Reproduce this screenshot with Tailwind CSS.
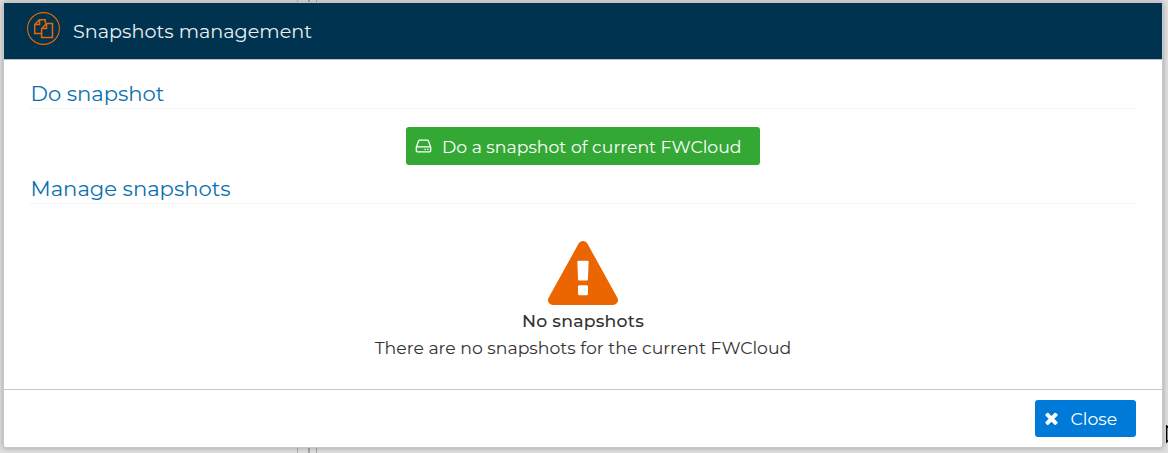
<!DOCTYPE html>
<html lang="en">
<head>
<meta charset="utf-8">
<title>Snapshots management</title>
<script src="https://cdn.jsdelivr.net/npm/@tailwindcss/browser@4"></script>
</head>
<body class="relative h-[453px] w-[1168px] overflow-hidden bg-[#dedede] font-[Montserrat,Inter,sans-serif]">
<!-- page panels behind the dialog -->
<div class="absolute left-[297px] top-0 h-full w-px bg-[#b4b4b4]"></div>
<div class="absolute left-[308px] top-0 h-full w-[2px] bg-[#a8a8a8]"></div>
<div class="absolute left-[316px] top-0 h-full w-px bg-[#a8a8a8]"></div>

<main class="relative ml-[3px] mt-[2px] flex h-[446px] w-[1160px] flex-col rounded-[3px] border border-[#c8c8c8] bg-white shadow-[0_0_5px_rgba(0,0,0,0.3)]">
  <header class="flex h-[57px] shrink-0 items-start border-b border-[#b5c0c9] bg-[#00334f] pl-[23px]">
    <svg class="mt-[9px] size-[33px]" viewBox="0 0 33 33" fill="none" stroke="#eb6500">
      <circle cx="16.5" cy="16.5" r="15.9" stroke-width="1.1"/>
      <path d="M14.2 21.5H7.7V12.6L12.5 7.7H18.3V11.3M12.6 7.8V12.6H7.8M14.6 25.4V16.7L19.5 11.6H25.5V25.4ZM19.5 11.8V16.6H14.8" stroke-width="1.5"/>
    </svg>
    <h1 class="ml-[13px] mt-[15px] whitespace-nowrap text-[19.2px] leading-[26px] text-[#e9eef1]">Snapshots management</h1>
  </header>

  <section class="flex grow flex-col px-[26px] text-[#333]">
    <h2 class="mt-[19px] flex h-[30px] items-center border-b border-[#f4f4f4] pl-[0.5px] pt-px text-[21.12px] text-[#0a70b0]">Do snapshot</h2>
    <button class="ml-[376px] mt-[18px] flex h-[38px] w-[354px] items-center rounded-[3px] bg-[#34a835] pl-[9px] text-[17.3px] text-white">
      <svg class="-mt-px h-[14px] w-[17px]" viewBox="0 0 17 14" fill="none" stroke="white" stroke-width="1.3">
        <path d="M1.3 8.3L3.5 2.1Q3.8 1.2 4.8 1.2H12.2Q13.2 1.2 13.5 2.1L15.7 8.3V11.7Q15.7 12.8 14.6 12.8H2.4Q1.3 12.8 1.3 11.7ZM1.5 7.9H15.5"/>
        <path d="M9.4 10.4h1.4M12.2 10.4h1.4" stroke-width="1.4"/>
      </svg>
      <span class="ml-[10px] whitespace-nowrap pt-[2px]">Do a snapshot of current FWCloud</span>
    </button>
    <h2 class="mt-[9px] flex h-[30px] items-center border-b border-[#f4f4f4] pl-[0.5px] pt-px text-[21.12px] text-[#0a70b0]">Manage snapshots</h2>
    <div class="mt-[37px] flex flex-col items-center whitespace-nowrap text-[17.3px]">
      <svg class="h-[64px] w-[70px]" viewBox="0 0 1792 1664" preserveAspectRatio="none" fill="#eb6500"><path d="M1024 1375v-190q0-14-9.500-23.500t-22.500-9.500h-192q-13 0-22.500 9.500t-9.500 23.500v190q0 14 9.500 23.500t22.500 9.500h192q13 0 22.500-9.500t9.500-23.500zm-2-374l18-459q0-12-10-19-13-11-24-11h-220q-11 0-24 11-10 7-10 21l17 457q0 10 10 16.500t24 6.500h185q14 0 23.500-6.500t10.500-16.500zm-14-934l768 1408q35 63-2 126-17 29-46.500 46t-63.500 17h-1536q-34 0-63.500-17t-46.500-46q-37-63-2-126l768-1408q17-31 47-49t65-18 65 18 47 49z"/></svg>
      <p class="mt-[2px] h-[27px] font-medium leading-[27px] tracking-[0.23px]">No snapshots</p>
      <p class="h-[27px] leading-[27px]">There are no snapshots for the current FWCloud</p>
    </div>
  </section>

  <footer class="flex h-[58px] shrink-0 items-start justify-end border-t border-[#c8c8c8] pr-[26px] pt-[10px]">
    <button class="flex h-[37px] w-[101px] items-center rounded-[3px] bg-[#007ad9] pl-[10px] text-[17.3px] text-white">
      <svg class="-mt-px size-[13px]" viewBox="302 302 1188 1252" fill="white"><path d="M1490 1322q0 40-28 68l-136 136q-28 28-68 28t-68-28l-294-294-294 294q-28 28-68 28t-68-28l-136-136q-28-28-28-68t28-68l294-294-294-294q-28-28-28-68t28-68l136-136q28-28 68-28t68 28l294 294 294-294q28-28 68-28t68 28l136 136q28 28 28 68t-28 68l-294 294 294 294q28 28 28 68z"/></svg>
      <span class="ml-[12.5px] pt-px">Close</span>
    </button>
  </footer>
</main>

<!-- mouse pointer at the right edge -->
<svg class="absolute left-[1166px] top-[425px] h-[20px] w-[12px]" viewBox="0 0 12 20"><path d="M.7 1V17L4.500 13.500L7 19L9.500 18L7 12.500H12Z" fill="#dedede" stroke="#000" stroke-width="1.4"/></svg>
</body>
</html>
